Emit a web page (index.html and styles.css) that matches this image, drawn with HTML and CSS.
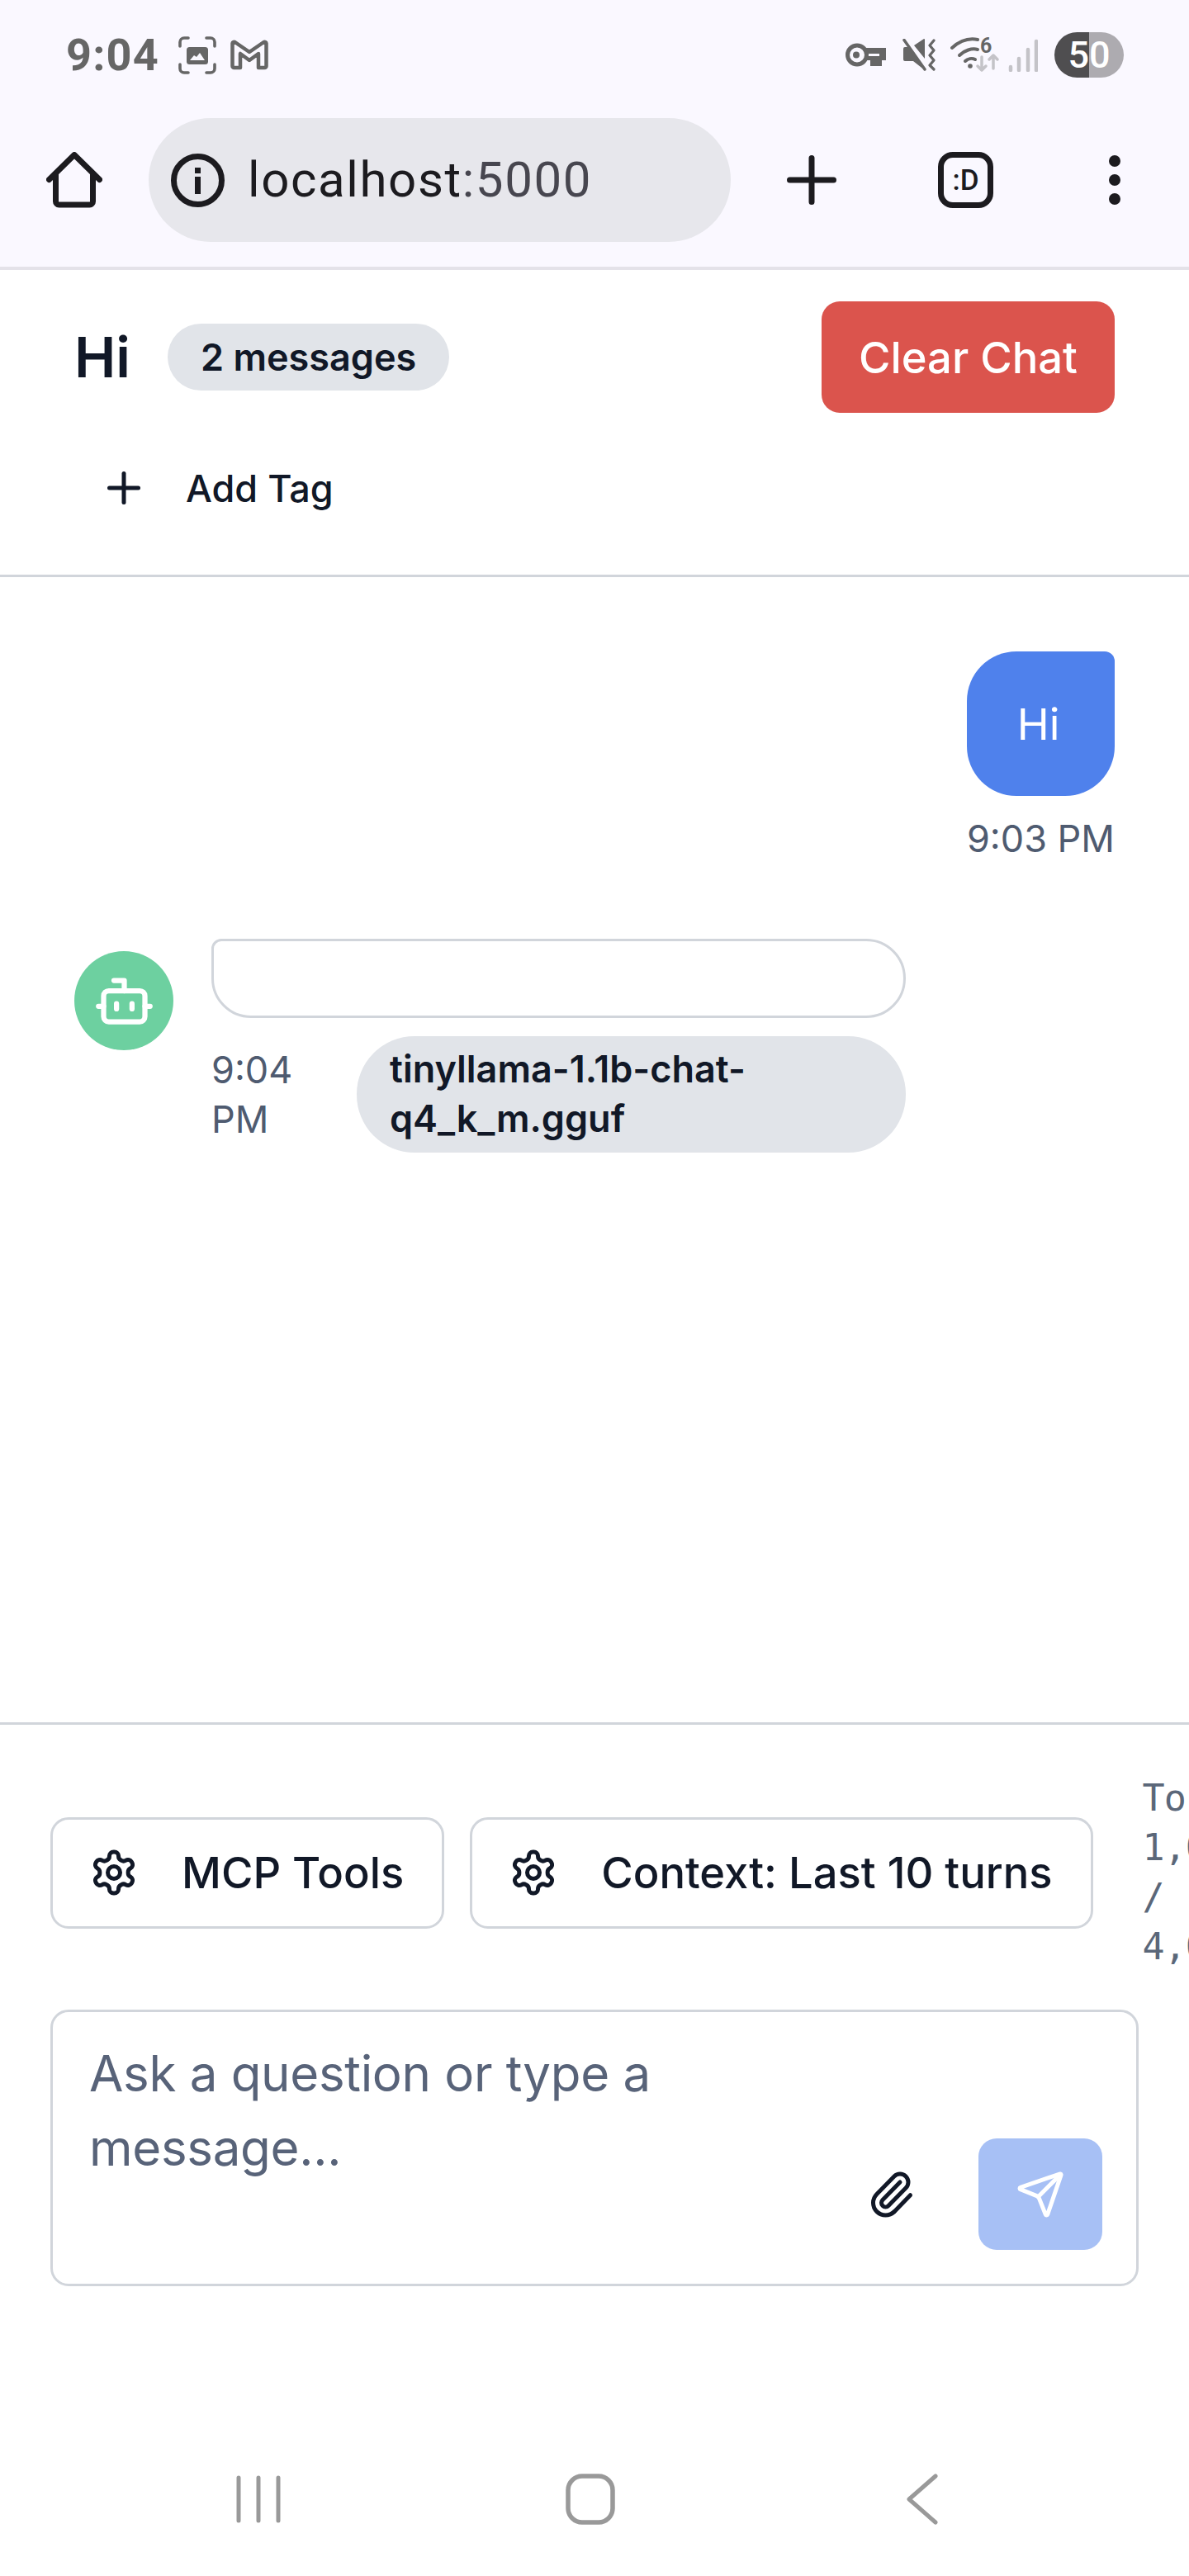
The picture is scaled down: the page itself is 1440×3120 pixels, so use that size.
FILE: index.html
```html
<!DOCTYPE html>
<html lang="en">
<head>
<meta charset="utf-8">
<title>Chat</title>
<link rel="stylesheet" href="styles.css">
</head>
<body>
<div class="phone">
  <div class="chrome">
    <div class="status">
      <span class="clock">9:04</span>
      <svg class="ic-shot" viewBox="0 0 46 46"><path d="M2 12V7a5 5 0 0 1 5-5h5M34 2h5a5 5 0 0 1 5 5v5M44 34v5a5 5 0 0 1-5 5h-5M12 44H7a5 5 0 0 1-5-5v-5" fill="none" stroke="#666" stroke-width="3.6" stroke-linecap="round"/><rect x="10" y="13" width="26" height="21" rx="3.5" fill="#666"/><path d="M14 29l5-6 3 2 4-5 6 9z" fill="#faf8ff"/></svg>
      <svg class="ic-m" viewBox="0 0 48 37"><path d="M3.5 4.5a2 2 0 0 1 3-1.500L24 15 41.500 3a2 2 0 0 1 3 1.500V32a2 2 0 0 1-2 2H35V17l-11 8-11-8v17H5.500a2 2 0 0 1-2-2z" fill="none" stroke="#666" stroke-width="4.500" stroke-linejoin="round"/></svg>
      <span class="status-spacer"></span>
      <svg class="ic-key" viewBox="0 0 50 29"><circle cx="14" cy="14.500" r="11.500" fill="none" stroke="#666" stroke-width="5"/><circle cx="13" cy="14.500" r="4" fill="#666"/><path d="M24 6H49V21H44V28H30V21H24V16H41V13H24Z" fill="#666"/></svg>
      <svg class="ic-mute" viewBox="0 0 40 39"><path d="M1 12a2 2 0 0 1 2-2H7L27 36V38L13 27H3a2 2 0 0 1-2-2Z" fill="#666"/><path d="M14 8 26 0a1 1 0 0 1 1 1V24Z" fill="#666"/><path d="M2 1.500 27 37" stroke="#666" stroke-width="3.500" stroke-linecap="round"/><path d="M38 2 33 8 38 14 33 20 38 26 33 32 38 37" fill="none" stroke="#666" stroke-width="3.200" stroke-linecap="round" stroke-linejoin="round"/></svg>
      <svg class="ic-wifi" viewBox="0 0 60 44"><path d="M2 13C12 4 23 1 33 3" fill="none" stroke="#666" stroke-width="4" stroke-linecap="round"/><path d="M11 22C17 16 26 13 33 15" fill="none" stroke="#666" stroke-width="4" stroke-linecap="round"/><path d="M18 29C21 26 26 25 30 27" fill="none" stroke="#666" stroke-width="4" stroke-linecap="round"/><circle cx="24" cy="35" r="2.800" fill="#666"/><text x="36" y="19" class="wifi-six">6</text><path d="M38 24V40M33 35l5 5 5-5" fill="none" stroke="#c4c3c8" stroke-width="3.500" stroke-linecap="round" stroke-linejoin="round"/><path d="M52 38V22M47 27l5-5 5 5" fill="none" stroke="#c4c3c8" stroke-width="3.500" stroke-linecap="round" stroke-linejoin="round"/></svg>
      <svg class="ic-signal" viewBox="0 0 36 40"><path d="M3 38v-4M13 38V24M24 38V13M34 38V3" fill="none" stroke="#c4c3c8" stroke-width="4.500" stroke-linecap="round"/></svg>
      <span class="battery">50</span>
    </div>
    <div class="toolbar">
      <svg class="ic-home" viewBox="0 0 68 68"><path d="M3.500 33.500 34 3.500 64.500 33.500M11.500 26V60a4 4 0 0 0 4 4H52.500a4 4 0 0 0 4-4V26" fill="none" stroke="#1c1b1f" stroke-width="7" stroke-linecap="round" stroke-linejoin="round"/></svg>
      <div class="url">
        <svg class="ic-info" viewBox="0 0 65 65"><circle cx="32.500" cy="32.500" r="29" fill="none" stroke="#1c1b1f" stroke-width="7"/><rect x="29" y="17" width="7" height="7" fill="#1c1b1f"/><rect x="29" y="28" width="7" height="21" fill="#1c1b1f"/></svg>
        <span class="url-text">localhost<span class="url-port">:5000</span></span>
      </div>
      <svg class="ic-newtab" viewBox="0 0 60 60"><path d="M3.500 30H56.500M30 3.500V56.500" stroke="#1c1b1f" stroke-width="7" stroke-linecap="round"/></svg>
      <span class="tabs">:D</span>
      <span class="dots"><i></i><i></i><i></i></span>
    </div>
  </div>

  <header class="chat-head">
    <div class="head-row">
      <h1 class="title">Hi</h1>
      <span class="count">2 messages</span>
      <button class="clear">Clear Chat</button>
    </div>
    <div class="tag-row">
      <svg class="lucide ic-60" viewBox="0 0 24 24"><path d="M5 12h14"/><path d="M12 5v14"/></svg>
      <span class="tag-label">Add Tag</span>
    </div>
  </header>

  <main class="messages">
    <div class="msg-user">
      <div class="bubble-user">Hi</div>
      <div class="time">9:03 PM</div>
    </div>
    <div class="msg-bot">
      <div class="avatar">
        <svg class="lucide ic-75" viewBox="0 0 24 24"><path d="M12 8V4H8"/><rect width="16" height="12" x="4" y="8" rx="2"/><path d="M2 14h2"/><path d="M20 14h2"/><path d="M15 13v2"/><path d="M9 13v2"/></svg>
      </div>
      <div class="bot-body">
        <div class="bubble-bot"></div>
        <div class="bot-meta">
          <div class="time time-bot">9:04 PM</div>
          <div class="model">tinyllama-1.1b-chat-q4_k_m.gguf</div>
        </div>
      </div>
    </div>
  </main>

  <footer class="composer">
    <div class="tools">
      <button class="tool">
        <svg class="lucide ic-60" viewBox="0 0 24 24"><path d="M12.220 2h-.44a2 2 0 0 0-2 2v.18a2 2 0 0 1-1 1.730l-.43.25a2 2 0 0 1-2 0l-.15-.08a2 2 0 0 0-2.730.73l-.22.38a2 2 0 0 0 .73 2.730l.15.1a2 2 0 0 1 1 1.720v.51a2 2 0 0 1-1 1.740l-.15.09a2 2 0 0 0-.73 2.730l.22.38a2 2 0 0 0 2.730.73l.15-.08a2 2 0 0 1 2 0l.43.25a2 2 0 0 1 1 1.730V20a2 2 0 0 0 2 2h.44a2 2 0 0 0 2-2v-.18a2 2 0 0 1 1-1.730l.43-.25a2 2 0 0 1 2 0l.15.08a2 2 0 0 0 2.730-.73l.22-.39a2 2 0 0 0-.73-2.730l-.15-.08a2 2 0 0 1-1-1.740v-.5a2 2 0 0 1 1-1.740l.15-.09a2 2 0 0 0 .73-2.730l-.22-.38a2 2 0 0 0-2.730-.73l-.15.08a2 2 0 0 1-2 0l-.43-.25a2 2 0 0 1-1-1.730V4a2 2 0 0 0-2-2z"/><circle cx="12" cy="12" r="3"/></svg>
        <span>MCP Tools</span>
      </button>
      <button class="tool">
        <svg class="lucide ic-60" viewBox="0 0 24 24"><path d="M12.220 2h-.44a2 2 0 0 0-2 2v.18a2 2 0 0 1-1 1.730l-.43.25a2 2 0 0 1-2 0l-.15-.08a2 2 0 0 0-2.730.73l-.22.38a2 2 0 0 0 .73 2.730l.15.1a2 2 0 0 1 1 1.720v.51a2 2 0 0 1-1 1.740l-.15.09a2 2 0 0 0-.73 2.730l.22.38a2 2 0 0 0 2.730.73l.15-.08a2 2 0 0 1 2 0l.43.25a2 2 0 0 1 1 1.730V20a2 2 0 0 0 2 2h.44a2 2 0 0 0 2-2v-.18a2 2 0 0 1 1-1.730l.43-.25a2 2 0 0 1 2 0l.15.08a2 2 0 0 0 2.730-.73l.22-.39a2 2 0 0 0-.73-2.730l-.15-.08a2 2 0 0 1-1-1.740v-.5a2 2 0 0 1 1-1.740l.15-.09a2 2 0 0 0 .73-2.730l-.22-.38a2 2 0 0 0-2.730-.73l-.15.08a2 2 0 0 1-2 0l-.43-.25a2 2 0 0 1-1-1.730V4a2 2 0 0 0-2-2z"/><circle cx="12" cy="12" r="3"/></svg>
        <span>Context: Last 10 turns</span>
      </button>
      <div class="tokens">Tokens:<br>1,024<br>/<br>4,096</div>
    </div>
    <div class="input-box">
      <div class="placeholder">Ask a question or type a message...</div>
      <button class="attach">
        <svg class="lucide ic-60 clip" viewBox="0 0 24 24"><path d="M13.234 20.252 21 12.300"/><path d="m16 6-8.414 8.586a2 2 0 0 0 0 2.828 2 2 0 0 0 2.828 0l8.414-8.586a4 4 0 0 0 0-5.656 4 4 0 0 0-5.656 0l-8.415 8.585a6 6 0 1 0 8.486 8.486"/></svg>
      </button>
      <button class="send">
        <svg class="lucide ic-60" viewBox="0 0 24 24"><path d="M14.536 21.686a.5.5 0 0 0 .937-.024l6.500-19a.496.496 0 0 0-.635-.635l-19 6.500a.5.500 0 0 0-.024.937l7.930 3.180a2 2 0 0 1 1.112 1.110z"/><path d="m21.854 2.147-10.940 10.939"/></svg>
      </button>
    </div>
  </footer>

  <nav class="sysnav">
    <svg class="nav-recent" viewBox="0 0 54 58"><path d="M3 3V55M27 3V55M51 3V55" stroke="#999" stroke-width="5" stroke-linecap="round"/></svg>
    <svg class="nav-home" viewBox="0 0 60 62"><rect x="3" y="3" width="54" height="56" rx="17" fill="none" stroke="#999" stroke-width="5.500"/></svg>
    <svg class="nav-back" viewBox="0 0 40 62"><path d="M36 3 4 31 36 59" fill="none" stroke="#999" stroke-width="5" stroke-linecap="round" stroke-linejoin="round"/></svg>
  </nav>
</div>
</body>
</html>
```

FILE: styles.css
```css
* { box-sizing: border-box; }
html, body { margin: 0; padding: 0; background: #fff; }
body { font-family: Inter, "Noto Sans", sans-serif; color: #111827; }
button { font: inherit; color: inherit; background: none; border: 0; padding: 0; }
.phone { width: 1440px; height: 3120px; overflow: hidden; display: flex; flex-direction: column; background: #fff; }

/* Browser chrome */
.chrome { height: 327px; flex: none; background: #faf8ff; border-bottom: 4px solid #e4e2e9; }
.status { height: 143px; display: flex; align-items: center; padding: 0 79px 10px 80px; color: #666; }
.clock { font-family: Roboto, sans-serif; font-weight: 700; font-size: 54px; letter-spacing: 1.2px; line-height: 60px; width: 136px; }
.ic-shot { width: 46px; height: 46px; }
.ic-m { width: 48px; height: 37px; margin-left: 16px; }
.status-spacer { flex: 1; }
.ic-key { width: 50px; height: 29px; }
.ic-mute { width: 40px; height: 39px; margin-left: 19px; }
.ic-wifi { width: 60px; height: 44px; margin-left: 18px; }
.ic-signal { width: 36px; height: 40px; margin-left: 10px; }
.wifi-six { font-family: Roboto, sans-serif; font-weight: 700; font-size: 25px; fill: #666; }
.battery { width: 84px; height: 55px; margin-left: 20px; border-radius: 28px; display: flex; align-items: center; justify-content: center; color: #fff; font-family: Roboto, sans-serif; font-weight: 500; font-size: 45px; background: linear-gradient(to right, #4f4e50 0 42px, #adabb0 42px 84px); }
.toolbar { height: 150px; display: flex; align-items: center; padding-left: 56px; }
.ic-home { width: 68px; height: 68px; }
.url { width: 705px; height: 150px; margin-left: 56px; border-radius: 75px; background: #e7e7ec; display: flex; align-items: center; padding-left: 27px; }
.ic-info { width: 65px; height: 65px; }
.url-text { margin-left: 28px; font-family: Roboto, sans-serif; font-size: 60px; letter-spacing: 1.6px; color: #1c1b1f; line-height: 70px; }
.url-port { color: #47464f; }
.ic-newtab { width: 60px; height: 60px; margin-left: 68px; }
.tabs { width: 67px; height: 68px; margin-left: 123px; border: 7px solid #1c1b1f; border-radius: 18px; display: flex; align-items: center; justify-content: center; font-family: Roboto, sans-serif; font-weight: 500; font-size: 35px; color: #1c1b1f; }
.dots { margin-left: 140px; display: flex; flex-direction: column; gap: 9px; }
.dots i { display: block; width: 14px; height: 14px; border-radius: 50%; background: #1c1b1f; }

/* Chat header */
.chat-head { height: 372px; flex: none; padding: 38px 90px 0; border-bottom: 3px solid #d1d5db; }
.head-row { display: flex; align-items: center; height: 135px; }
.title { margin: 0; font-size: 67.5px; line-height: 90px; font-weight: 600; }
.count { margin-left: 45px; height: 81px; padding: 0 40px; border-radius: 41px; background: #e1e4e9; font-size: 45px; font-weight: 600; line-height: 81px; }
.clear { margin-left: auto; width: 355px; height: 135px; border-radius: 22px; background: #db544d; color: #fff; font-size: 52.5px; font-weight: 500; }
.tag-row { display: flex; align-items: center; gap: 45px; height: 90px; margin-top: 46px; padding-left: 30px; }
.tag-label { font-size: 45px; font-weight: 500; }

/* Icons */
.lucide { fill: none; stroke: currentColor; stroke-width: 2; stroke-linecap: round; stroke-linejoin: round; flex: none; }
.ic-60 { width: 60px; height: 60px; }
.ic-75 { width: 75px; height: 75px; }

/* Messages */
.messages { flex: 1; min-height: 0; padding: 90px 90px 0; display: flex; flex-direction: column; }
.msg-user { display: flex; flex-direction: column; align-items: flex-end; }
.bubble-user { width: 179px; height: 175px; padding-right: 6px; border-radius: 60px 12px 60px 60px; background: #4f81ec; color: #fff; font-size: 52.5px; display: flex; align-items: center; justify-content: center; }
.time { font-size: 45px; line-height: 60px; color: #4f5b70; }
.msg-user .time { margin-top: 22px; }
.msg-bot { display: flex; gap: 46px; margin-top: 91px; width: 1007px; }
.avatar { width: 120px; height: 120px; margin-top: 15px; flex: none; border-radius: 50%; background: #6dd0a0; color: #fff; display: flex; align-items: center; justify-content: center; }
.bot-body { flex: 1; min-width: 0; }
.bubble-bot { height: 96px; border: 3px solid #d1d5db; border-radius: 12px 48px 48px 48px; background: #fff; }
.bot-meta { display: flex; align-items: center; gap: 46px; margin-top: 22px; }
.time-bot { width: 130px; flex: none; }
.model { flex: 1; min-width: 0; padding: 10px 40px 11px; border-radius: 70px; background: #e1e4e9; font-size: 45px; line-height: 60px; font-weight: 600; }

/* Composer */
.composer { flex: none; height: 683px; border-top: 3px solid #d1d5db; padding: 59px 0 0 61px; }
.tools { display: flex; align-items: center; gap: 31px; height: 240px; }
.tool { flex: none; height: 135px; border: 3px solid #d1d5db; border-radius: 22px; display: flex; align-items: center; padding: 0 46px 0 44px; gap: 52px; font-size: 52.5px; font-weight: 500; background: #fff; }
.tokens { flex: none; margin-left: 29px; font-family: "DejaVu Sans Mono", monospace; font-size: 45px; line-height: 60px; letter-spacing: -1px; color: #5b6779; }
.input-box { width: 1318px; height: 335px; margin-top: 46px; border: 3px solid #d1d5db; border-radius: 22px; padding: 29px 41px 41px 44px; display: flex; align-items: flex-end; }
.placeholder { align-self: flex-start; width: 800px; margin-right: auto; font-size: 60px; line-height: 90px; letter-spacing: -.3px; color: #586379; }
.attach { width: 150px; height: 135px; display: flex; align-items: center; justify-content: center; }
.send { width: 150px; height: 135px; margin-left: 30px; border-radius: 22px; background: #a7c0f5; color: #fff; display: flex; align-items: center; justify-content: center; }

/* System navigation */
.sysnav { flex: none; display: grid; grid-template-columns: repeat(3, 402px); justify-content: center; justify-items: center; align-items: center; padding: 0 11px 0 0; height: 62px; margin: 227px 0 62px; }
.nav-recent { width: 54px; height: 58px; }
.nav-home { width: 60px; height: 62px; }
.nav-back { width: 40px; height: 62px; }
```
